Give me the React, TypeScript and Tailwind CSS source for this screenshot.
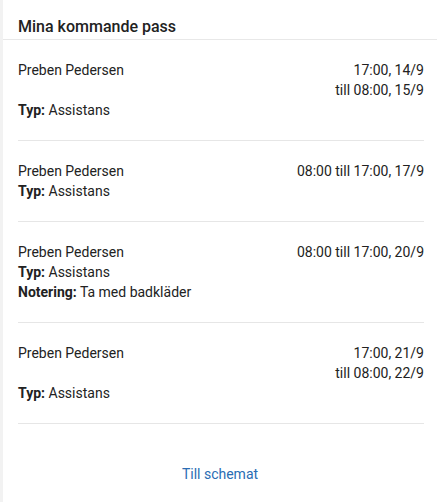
const shifts = [
  { name: "Preben Pedersen", time: ["17:00, 14/9", "till 08:00, 15/9"], type: "Assistans" },
  { name: "Preben Pedersen", time: ["08:00 till 17:00, 17/9"], type: "Assistans" },
  { name: "Preben Pedersen", time: ["08:00 till 17:00, 20/9"], type: "Assistans", note: "Ta med badkläder" },
  { name: "Preben Pedersen", time: ["17:00, 21/9", "till 08:00, 22/9"], type: "Assistans" },
];

export default function App() {
  return (
    <div className="flex min-h-[502px] bg-[#f2f2f2] font-['Roboto',sans-serif] text-[14px] leading-[20px] text-[#222]">
      <div className="ml-[3px] flex flex-1 flex-col bg-white">
        <div className="border-b border-[#e8e8e8] px-[15px] pt-[15px]">
          <h2 className="text-[16px] font-medium leading-[24px] text-[#222]">Mina kommande pass</h2>
        </div>
        <ul className="pl-[15px] pr-[13px]">
          {shifts.map((s, i) => (
            <li key={i} className="flex justify-between border-b border-[#e6e6e6] py-5">
              <div>
                <div>{s.name}</div>
                {s.time.length > 1 && <div className="h-5" />}
                <div>
                  <span className="font-bold">Typ:</span> {s.type}
                </div>
                {s.note && (
                  <div>
                    <span className="font-bold">Notering:</span> {s.note}
                  </div>
                )}
              </div>
              <div className="text-right">
                {s.time.map((t) => (
                  <div key={t}>{t}</div>
                ))}
              </div>
            </li>
          ))}
        </ul>
        <div className="pt-[40px] text-center">
          <a href="#" className="text-[#2a6db3]">Till schemat</a>
        </div>
      </div>
    </div>
  );
}
